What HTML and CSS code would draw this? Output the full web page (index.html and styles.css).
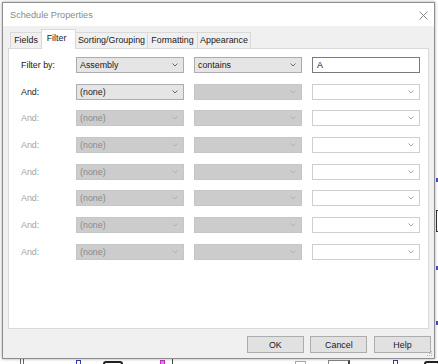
FILE: index.html
```html
<!DOCTYPE html>
<html>
<head>
<meta charset="utf-8">
<link rel="stylesheet" href="styles.css">
</head>
<body>
<div class="backdrop">
  <span class="bd bd-bars"></span>
  <span class="bd bd-blue1"></span>
  <span class="bd bd-black1"></span>
  <span class="bd bd-mag"></span>
  <span class="bd bd-line"></span>
  <span class="bd bd-gray1"></span>
  <span class="bd bd-gray2"></span>
  <span class="bd bd-blue2"></span>
  <span class="bd bd-black2"></span>
  <span class="bd bd-rblue1"></span>
  <span class="bd bd-rbrack"></span>
  <span class="bd bd-rblue2"></span>
  <span class="bd bd-rblue3"></span>
</div>
<div class="dialog">
  <div class="titlebar">
    <span class="title">Schedule Properties</span>
    <svg class="close" width="9" height="9" viewBox="0 0 9 9"><path d="M0.5 0.5L8.5 8.5M8.5 0.5L0.5 8.5" stroke="#8a8a8a" stroke-width="1" fill="none"/></svg>
  </div>
  <div class="tabs">
    <div class="tab t-fields">Fields</div>
    <div class="tab t-filter active">Filter</div>
    <div class="tab t-sort">Sorting/Grouping</div>
    <div class="tab t-format">Formatting</div>
    <div class="tab t-appear">Appearance</div>
  </div>
  <div class="panel">
    <div class="grid">
      <div class="label">Filter by:</div>
      <div class="combo on"><span>Assembly</span><svg class="chev" width="6" height="4" viewBox="0 0 6 4"><polyline points="0.5,0.5 3,3 5.5,0.5"/></svg></div>
      <div class="combo on"><span>contains</span><svg class="chev" width="6" height="4" viewBox="0 0 6 4"><polyline points="0.5,0.5 3,3 5.5,0.5"/></svg></div>
      <div class="field">A</div>

      <div class="label">And:</div>
      <div class="combo on"><span>(none)</span><svg class="chev" width="6" height="4" viewBox="0 0 6 4"><polyline points="0.5,0.5 3,3 5.5,0.5"/></svg></div>
      <div class="combo off"><span></span><svg class="chev" width="6" height="4" viewBox="0 0 6 4"><polyline points="0.5,0.5 3,3 5.5,0.5"/></svg></div>
      <div class="combo edit"><span></span><svg class="chev" width="6" height="4" viewBox="0 0 6 4"><polyline points="0.5,0.5 3,3 5.5,0.5"/></svg></div>

      <div class="label dis">And:</div>
      <div class="combo off"><span>(none)</span><svg class="chev" width="6" height="4" viewBox="0 0 6 4"><polyline points="0.5,0.5 3,3 5.5,0.5"/></svg></div>
      <div class="combo off"><span></span><svg class="chev" width="6" height="4" viewBox="0 0 6 4"><polyline points="0.5,0.5 3,3 5.5,0.5"/></svg></div>
      <div class="combo edit"><span></span><svg class="chev" width="6" height="4" viewBox="0 0 6 4"><polyline points="0.5,0.5 3,3 5.5,0.5"/></svg></div>

      <div class="label dis">And:</div>
      <div class="combo off"><span>(none)</span><svg class="chev" width="6" height="4" viewBox="0 0 6 4"><polyline points="0.5,0.5 3,3 5.5,0.5"/></svg></div>
      <div class="combo off"><span></span><svg class="chev" width="6" height="4" viewBox="0 0 6 4"><polyline points="0.5,0.5 3,3 5.5,0.5"/></svg></div>
      <div class="combo edit"><span></span><svg class="chev" width="6" height="4" viewBox="0 0 6 4"><polyline points="0.5,0.5 3,3 5.5,0.5"/></svg></div>

      <div class="label dis">And:</div>
      <div class="combo off"><span>(none)</span><svg class="chev" width="6" height="4" viewBox="0 0 6 4"><polyline points="0.5,0.5 3,3 5.5,0.5"/></svg></div>
      <div class="combo off"><span></span><svg class="chev" width="6" height="4" viewBox="0 0 6 4"><polyline points="0.5,0.5 3,3 5.5,0.5"/></svg></div>
      <div class="combo edit"><span></span><svg class="chev" width="6" height="4" viewBox="0 0 6 4"><polyline points="0.5,0.5 3,3 5.5,0.5"/></svg></div>

      <div class="label dis">And:</div>
      <div class="combo off"><span>(none)</span><svg class="chev" width="6" height="4" viewBox="0 0 6 4"><polyline points="0.5,0.5 3,3 5.5,0.5"/></svg></div>
      <div class="combo off"><span></span><svg class="chev" width="6" height="4" viewBox="0 0 6 4"><polyline points="0.5,0.5 3,3 5.5,0.5"/></svg></div>
      <div class="combo edit"><span></span><svg class="chev" width="6" height="4" viewBox="0 0 6 4"><polyline points="0.5,0.5 3,3 5.5,0.5"/></svg></div>

      <div class="label dis">And:</div>
      <div class="combo off"><span>(none)</span><svg class="chev" width="6" height="4" viewBox="0 0 6 4"><polyline points="0.5,0.5 3,3 5.5,0.5"/></svg></div>
      <div class="combo off"><span></span><svg class="chev" width="6" height="4" viewBox="0 0 6 4"><polyline points="0.5,0.5 3,3 5.5,0.5"/></svg></div>
      <div class="combo edit"><span></span><svg class="chev" width="6" height="4" viewBox="0 0 6 4"><polyline points="0.5,0.5 3,3 5.5,0.5"/></svg></div>

      <div class="label dis">And:</div>
      <div class="combo off"><span>(none)</span><svg class="chev" width="6" height="4" viewBox="0 0 6 4"><polyline points="0.5,0.5 3,3 5.5,0.5"/></svg></div>
      <div class="combo off"><span></span><svg class="chev" width="6" height="4" viewBox="0 0 6 4"><polyline points="0.5,0.5 3,3 5.5,0.5"/></svg></div>
      <div class="combo edit"><span></span><svg class="chev" width="6" height="4" viewBox="0 0 6 4"><polyline points="0.5,0.5 3,3 5.5,0.5"/></svg></div>
    </div>
  </div>
  <div class="footer">
    <div class="btn">OK</div>
    <div class="btn">Cancel</div>
    <div class="btn">Help</div>
  </div>
  <svg class="grip" width="6" height="6" viewBox="0 0 6 6"><g fill="#b8b8b8"><rect x="4" y="0" width="1" height="1"/><rect x="2" y="2" width="1" height="1"/><rect x="4" y="2" width="1" height="1"/><rect x="0" y="4" width="1" height="1"/><rect x="2" y="4" width="1" height="1"/><rect x="4" y="4" width="1" height="1"/></g></svg>
</div>
</body>
</html>
```

FILE: styles.css
```css
* { box-sizing: border-box; }
html, body { margin: 0; padding: 0; }
body {
  width: 438px;
  height: 364px;
  overflow: hidden;
  background: #ffffff;
  font-family: "Liberation Sans", Arial, sans-serif;
  font-size: 8.9px;
  color: #1a1a1a;
  position: relative;
}

.backdrop { position: absolute; inset: 0; }
.bd { position: absolute; display: block; }
.bd-bars { left: 20px; top: 359px; width: 4px; height: 5px; border-left: 1px solid #666; border-right: 1px solid #666; }
.bd-blue1 { left: 76px; top: 360px; width: 5px; height: 5px; border: 1px solid #3a3ab0; }
.bd-black1 { left: 103px; top: 361px; width: 20px; height: 6px; border: 2px solid #222; border-radius: 3px; }
.bd-mag { left: 160px; top: 360px; width: 5px; height: 5px; border: 1px solid #c030c0; background: #e080e0; }
.bd-line { left: 172px; top: 359px; width: 1px; height: 5px; background: #444; }
.bd-gray1 { left: 295px; top: 361px; width: 11px; height: 3px; border-top: 1px solid #aaa; border-left: 1px solid #aaa; border-right: 1px solid #aaa; }
.bd-gray2 { left: 328px; top: 360px; width: 22px; height: 4px; border-top: 1px solid #888; border-left: 1px solid #888; border-right: 2px solid #444; }
.bd-blue2 { left: 393px; top: 360px; width: 5px; height: 5px; border: 1px solid #3a3ab0; }
.bd-black2 { left: 424px; top: 361px; width: 16px; height: 6px; border: 2px solid #222; border-radius: 3px; }
.bd-rblue1 { left: 436px; top: 178px; width: 2px; height: 4px; background: #4a4ac0; }
.bd-rbrack { left: 436px; top: 210px; width: 3px; height: 22px; border: 1px solid #333; border-right: 0; }
.bd-rblue2 { left: 436px; top: 266px; width: 2px; height: 4px; background: #4a4ac0; }
.bd-rblue3 { left: 436px; top: 321px; width: 2px; height: 4px; background: #4a4ac0; }

.dialog {
  position: relative;
  margin: 2px 0 0 2px;
  width: 433px;
  height: 357px;
  border: 1px solid #8e8e8e;
  background: #f0f0f0;
  box-shadow: 0 0 3px rgba(0,0,0,0.35);
}

.titlebar {
  height: 23px;
  background: #ffffff;
  display: flex;
  align-items: center;
  justify-content: space-between;
  padding: 0 6px 0 7px;
}
.title {
  font-size: 9.2px;
  color: #8a8a8a;
}
.close { display: block; margin-top: 1px; }

.tabs {
  height: 22px;
  display: flex;
  align-items: flex-end;
  padding-left: 7px;
  position: relative;
  z-index: 2;
}
.tab {
  height: 16px;
  border: 1px solid #d9d9d9;
  border-bottom: 0;
  border-right: 0;
  background: #f0f0f0;
  text-align: center;
  line-height: 15px;
  color: #1a1a1a;
  white-space: nowrap;
}
.t-fields { width: 31px; }
.t-filter { width: 35px; }
.t-sort { width: 71px; border-left: 0; }
.t-format { width: 50px; }
.t-appear { width: 54px; border-right: 1px solid #d9d9d9; }
.tab.active {
  height: 20px;
  margin-bottom: -1px;
  background: #ffffff;
  border-right: 1px solid #d9d9d9;
  line-height: 17px;
  padding-right: 4px;
}

.panel {
  margin-left: 5px;
  width: 421px;
  height: 281px;
  border: 1px solid #d9d9d9;
  background: #ffffff;
  position: relative;
  z-index: 1;
}
.grid {
  display: grid;
  grid-template-columns: 45px 108px 108px 108px;
  grid-auto-rows: 16px;
  column-gap: 10px;
  row-gap: 10.67px;
  padding: 8px 0 0 12px;
}
.label {
  display: flex;
  align-items: center;
  color: #1a1a1a;
  white-space: nowrap;
}
.label.dis { color: #a3a3a3; }

.combo {
  display: flex;
  align-items: center;
  justify-content: space-between;
  padding: 0 5px 0 3px;
  border: 1px solid #acacac;
  white-space: nowrap;
}
.combo .chev { display: block; fill: none; stroke-width: 1; }
.combo.on { background: #e5e5e5; border-color: #acacac; color: #1a1a1a; }
.combo.on .chev { stroke: #6a6a6a; }
.combo.off { background: #cccccc; border-color: #c6c6c6; color: #8a8a8a; }
.combo.off .chev { stroke: #b0b0b0; }
.combo.edit { background: #ffffff; border-color: #cfcfcf; }
.combo.edit .chev { stroke: #a8a8a8; }

.field {
  display: flex;
  align-items: center;
  padding-left: 4px;
  border: 1px solid #7a7a7a;
  background: #ffffff;
  color: #111;
}

.footer {
  display: flex;
  justify-content: flex-end;
  gap: 6.6px;
  margin-top: 7px;
  padding-right: 3px;
}
.btn {
  width: 57px;
  height: 17px;
  border: 1px solid #adadad;
  background: #e1e1e1;
  display: flex;
  align-items: center;
  justify-content: center;
  color: #1a1a1a;
}
.grip { position: absolute; right: 1px; bottom: 1px; }
```
